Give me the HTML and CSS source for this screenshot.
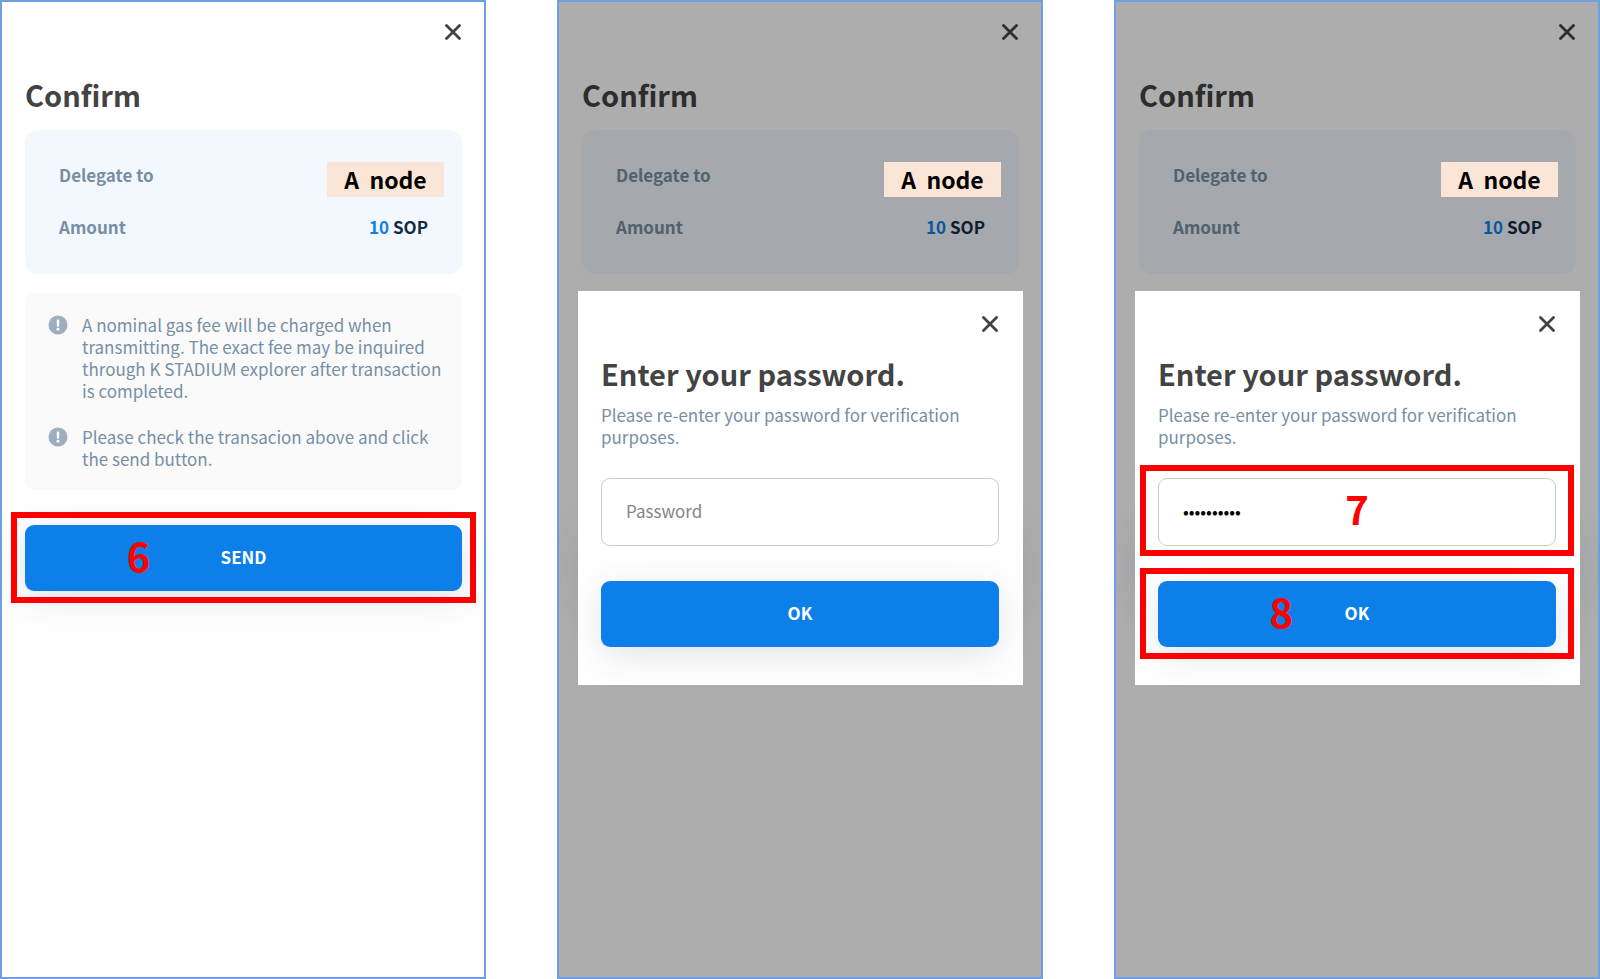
FILE: index.html
```html
<!DOCTYPE html>
<html lang="en">
<head>
<meta charset="utf-8">
<meta name="viewport" content="width=device-width, initial-scale=1">
<title>Confirm delegation</title>
<link rel="stylesheet" href="styles.css">
</head>
<body>
<main class="steps">

  <section class="screen">
    <button class="close" type="button" aria-label="Close"><svg viewBox="0 0 16 16"><path d="M1.5 1.5l13 13M14.5 1.5l-13 13"/></svg></button>
    <h1 class="title">Confirm</h1>
    <dl class="summary">
      <div class="row"><dt>Delegate to</dt><dd class="node">A&nbsp; node</dd></div>
      <div class="row"><dt>Amount</dt><dd class="amount"><span class="value">10</span> SOP</dd></div>
    </dl>
    <ul class="notices">
      <li class="notice">
        <svg class="info" viewBox="0 0 20 20"><circle cx="10" cy="10" r="9.5"/><path d="M8.6 4.400h2.800l-.4 7.400H9z"/><circle class="dot" cx="10" cy="14.200" r="1.500"/></svg>
        <p>A nominal gas fee will be charged when<br>transmitting. The exact fee may be inquired<br>through K STADIUM explorer after transaction<br>is completed.</p>
      </li>
      <li class="notice">
        <svg class="info" viewBox="0 0 20 20"><circle cx="10" cy="10" r="9.5"/><path d="M8.6 4.400h2.800l-.4 7.400H9z"/><circle class="dot" cx="10" cy="14.200" r="1.500"/></svg>
        <p>Please check the transacion above and click<br>the send button.</p>
      </li>
    </ul>
    <div class="control send">
      <button class="primary" type="button">SEND</button>
      <span class="frame"></span>
      <span class="number number-6">6</span>
    </div>
  </section>

  <section class="screen">
    <button class="close" type="button" aria-label="Close"><svg viewBox="0 0 16 16"><path d="M1.5 1.5l13 13M14.5 1.5l-13 13"/></svg></button>
    <h1 class="title">Confirm</h1>
    <dl class="summary">
      <div class="row"><dt>Delegate to</dt><dd class="node">A&nbsp; node</dd></div>
      <div class="row"><dt>Amount</dt><dd class="amount"><span class="value">10</span> SOP</dd></div>
    </dl>
    <div class="overlay">
      <form class="dialog">
        <button class="close" type="button" aria-label="Close dialog"><svg viewBox="0 0 16 16"><path d="M1.5 1.5l13 13M14.5 1.5l-13 13"/></svg></button>
        <h2 class="title"><label for="password-empty">Enter your password.</label></h2>
        <p class="hint">Please re-enter your password for verification<br>purposes.</p>
        <div class="control">
          <input class="field" id="password-empty" type="password" placeholder="Password">
        </div>
        <div class="control">
          <button class="primary" type="button">OK</button>
        </div>
      </form>
    </div>
  </section>

  <section class="screen">
    <button class="close" type="button" aria-label="Close"><svg viewBox="0 0 16 16"><path d="M1.5 1.5l13 13M14.5 1.5l-13 13"/></svg></button>
    <h1 class="title">Confirm</h1>
    <dl class="summary">
      <div class="row"><dt>Delegate to</dt><dd class="node">A&nbsp; node</dd></div>
      <div class="row"><dt>Amount</dt><dd class="amount"><span class="value">10</span> SOP</dd></div>
    </dl>
    <div class="overlay">
      <form class="dialog">
        <button class="close" type="button" aria-label="Close dialog"><svg viewBox="0 0 16 16"><path d="M1.5 1.5l13 13M14.5 1.5l-13 13"/></svg></button>
        <h2 class="title"><label for="password-filled">Enter your password.</label></h2>
        <p class="hint">Please re-enter your password for verification<br>purposes.</p>
        <div class="control">
          <input class="field" id="password-filled" type="password" placeholder="Password" value="abcdefghij">
          <span class="frame"></span>
          <span class="number number-7">7</span>
        </div>
        <div class="control">
          <button class="primary" type="button">OK</button>
          <span class="frame"></span>
          <span class="number number-8">8</span>
        </div>
      </form>
    </div>
  </section>

</main>
</body>
</html>
```
FILE: styles.css
```css
* {
  box-sizing: border-box;
}

body {
  margin: 0;
  background: #fff;
  color: #434343;
  font-family: "Noto Sans CJK KR", "Noto Sans", sans-serif;
  font-size: 17px;
  line-height: 22px;
}

h1, h2, p, dl, dd, ul {
  margin: 0;
  padding: 0;
}

button, input {
  font: inherit;
}

.steps {
  display: grid;
  grid-template-columns: repeat(3, 1fr);
  gap: 71px;
  min-height: 100vh;
}

.screen {
  position: relative;
  display: flex;
  flex-direction: column;
  padding: 22px 22px 22px 23px;
  border: 2px solid #6f9fdf;
}

.close {
  align-self: flex-end;
  display: block;
  width: 16px;
  height: 16px;
  margin-right: 1px;
  padding: 0;
  border: 0;
  background: none;
}

.close svg {
  display: block;
  fill: none;
  stroke: #434343;
  stroke-width: 2.8;
  stroke-linecap: round;
}

.title {
  font-size: 29px;
  font-weight: 700;
  line-height: 40px;
}

.screen > .title {
  margin-top: 34px;
}

.summary {
  display: flex;
  flex-direction: column;
  gap: 17px;
  margin-top: 16px;
  padding: 32px 18px 34px 34px;
  border-radius: 13px;
  background: #f3f8ff;
}

.row {
  display: flex;
  justify-content: space-between;
  color: #778fa5;
  font-weight: 700;
  line-height: 26px;
}

.node {
  z-index: 2;
  width: 117px;
  background: #fbe5d6;
  color: #000;
  font-size: 23px;
  line-height: 35px;
  text-align: center;
}

.amount {
  padding-right: 16px;
  color: #142c44;
}

.value {
  color: #0f80ea;
}

.notices {
  display: flex;
  flex-direction: column;
  gap: 24px;
  margin-top: 19px;
  padding: 21px 0 20px 23px;
  border-radius: 9px;
  background: #fafafa;
  list-style: none;
}

.notice {
  display: flex;
  gap: 14px;
  color: #778fa5;
  white-space: nowrap;
}

.info {
  flex: none;
  width: 20px;
  height: 20px;
  margin-top: 1px;
  fill: #9daebf;
}

.info path,
.info .dot {
  fill: #fafafa;
}

.control {
  position: relative;
}

.send {
  margin-top: 35px;
}

.primary {
  display: block;
  width: 100%;
  height: 66px;
  padding: 0 0 3px;
  border: 0;
  border-radius: 9px;
  background: #0d7fe9;
  box-shadow: 0 8px 36px rgba(40, 60, 100, 0.14);
  color: #fff;
  font-weight: 700;
}

.overlay {
  position: absolute;
  inset: 0;
  z-index: 1;
  display: flex;
  align-items: center;
  padding: 0 18px 3px 19px;
  background: rgba(0, 0, 0, 0.32);
}

.dialog {
  position: relative;
  display: flex;
  flex-direction: column;
  flex: 1;
  padding: 25px 24px 38px 23px;
  background: #fff;
}

.dialog::before {
  content: "";
  position: absolute;
  z-index: -1;
  inset: 234px 4px 94px;
  box-shadow: 0 8px 36px rgba(40, 60, 100, 0.14);
}

.dialog .title {
  margin-top: 21px;
}

.hint {
  margin-top: 11px;
  margin-bottom: 30px;
  color: #778fa5;
  white-space: nowrap;
}

.field {
  display: block;
  width: 100%;
  height: 68px;
  margin-bottom: 35px;
  padding: 0 24px 4px;
  border: 1px solid #cbcbcb;
  border-radius: 9px;
  background: #fff;
  color: #000;
}

.field::placeholder {
  color: #858585;
  opacity: 1;
}

/* Numbered call-outs drawn over the controls */
.frame {
  position: absolute;
  inset: -13px -14px -12px;
  border: 6px solid #f00;
  pointer-events: none;
}

.dialog .frame {
  right: -18px;
  left: -18px;
  bottom: auto;
  height: 91px;
}

.number {
  position: absolute;
  top: 3px;
  color: #f00;
  font-family: "Noto Sans CJK KR", sans-serif;
  font-size: 40px;
  font-weight: 700;
  line-height: 54px;
  transform: translateX(-50%);
  pointer-events: none;
}

.number-6 {
  left: 26%;
}

.number-7 {
  left: 50%;
}

.number-8 {
  left: 31%;
}
```
